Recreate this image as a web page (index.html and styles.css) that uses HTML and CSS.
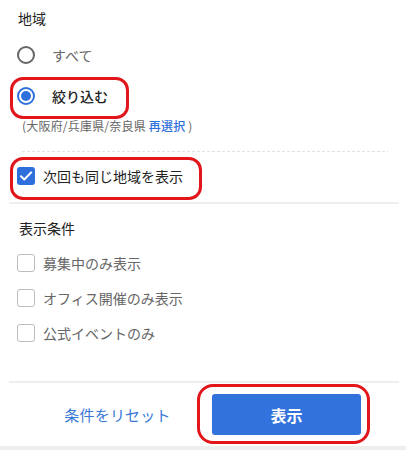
FILE: index.html
```html
<!DOCTYPE html>
<html lang="ja">
<head>
<meta charset="utf-8">
<title>絞り込み条件</title>
<link rel="stylesheet" href="styles.css">
</head>
<body>
<div class="panel">
  <section class="group group-area">
    <h2 class="group-title">地域</h2>
    <div class="row">
      <span class="radio"></span>
      <span class="label label-muted">すべて</span>
    </div>
    <div class="row mark mark-radio">
      <span class="radio radio-on"></span>
      <span class="label label-strong">絞り込む</span>
    </div>
    <p class="note">(大阪府/兵庫県/奈良県 <a class="note-link">再選択</a> )</p>
    <div class="dash"></div>
    <div class="row row-remember mark mark-check">
      <span class="check check-on">
        <svg viewBox="0 0 18 18" width="18" height="18"><path d="M4 9.2l3.3 3.3L14.2 5.4" fill="none" stroke="#fff" stroke-width="2" stroke-linecap="round" stroke-linejoin="round"/></svg>
      </span>
      <span class="label">次回も同じ地域を表示</span>
    </div>
  </section>

  <div class="rule"></div>

  <section class="group group-cond">
    <h2 class="group-title">表示条件</h2>
    <div class="row row-cond">
      <span class="check"></span>
      <span class="label label-muted">募集中のみ表示</span>
    </div>
    <div class="row row-cond">
      <span class="check"></span>
      <span class="label label-muted">オフィス開催のみ表示</span>
    </div>
    <div class="row row-cond">
      <span class="check"></span>
      <span class="label label-muted">公式イベントのみ</span>
    </div>
  </section>

  <div class="rule rule-foot"></div>

  <footer class="actions">
    <a class="reset">条件をリセット</a>
    <div class="submit-wrap mark mark-btn">
      <button class="submit" type="button">表示</button>
    </div>
  </footer>
  <div class="strip"></div>
</div>
</body>
</html>
```

FILE: styles.css
```css
* { box-sizing: border-box; }

html, body {
  margin: 0;
  background: #fff;
}

body {
  font-family: "Noto Sans CJK JP", "Noto Sans", sans-serif;
  color: #222;
  overflow: hidden;
}

.panel {
  width: 406px;
}

.group-area {
  padding-top: 8px;
}

.group-title {
  margin: 0;
  padding-left: 18px;
  font-size: 14px;
  font-weight: 400;
  line-height: 20px;
  color: #222;
}

.row {
  display: flex;
  align-items: center;
  height: 41px;
  padding-left: 17px;
}

.group-area .row:first-of-type {
  margin-top: 6px;
}

.radio {
  position: relative;
  width: 18px;
  height: 18px;
  border: 2px solid #666;
  border-radius: 50%;
  margin-right: 17px;
  flex: none;
}

.radio-on {
  border-color: #2f6fdb;
}

.radio-on::before {
  content: "";
  position: absolute;
  left: 2px;
  top: 2px;
  width: 10px;
  height: 10px;
  border-radius: 50%;
  background: #2f6fdb;
}

.label {
  font-size: 14px;
  line-height: 20px;
  color: #222;
}

.label-muted {
  color: #666;
}

.label-strong {
  font-weight: 500;
  color: #1f1f1f;
}

.note {
  margin: 1px 0 0;
  padding-left: 22px;
  font-size: 12px;
  line-height: 18px;
  letter-spacing: 0.2px;
  color: #666;
}

.note-link {
  color: #2f6fdb;
  font-weight: 500;
}

.dash {
  margin: 16px 18px 0 22px;
  height: 1px;
  background: repeating-linear-gradient(to right, #e2e2e2 0 3px, transparent 3px 5px);
}

.row-remember {
  height: 36px;
  margin-top: 6px;
}

.check {
  width: 18px;
  height: 18px;
  border: 1.5px solid #bdbdbd;
  border-radius: 3px;
  margin-right: 8px;
  flex: none;
}

.check-on {
  display: flex;
  border: none;
  background: #2f6fdb;
}

.rule {
  margin: 8px 7px 0 9px;
  height: 2px;
  background: #eeeeee;
}

.group-cond {
  padding-top: 14px;
}

.group-cond .group-title {
  padding-left: 19px;
  margin-bottom: 7px;
}

.row-cond {
  height: 35px;
}

.rule-foot {
  margin-top: 31px;
}

.actions {
  display: grid;
  grid-template-columns: 1fr 1fr;
  gap: 20px;
  padding: 11px 45px 11px 43px;
  align-items: center;
}

.reset {
  text-align: center;
  font-size: 15px;
  line-height: 20px;
  letter-spacing: 0.2px;
  color: #3a78d8;
}

.submit {
  display: block;
  width: 100%;
  height: 41px;
  border: none;
  border-radius: 3px;
  background: #3272dc;
  color: #fff;
  font-family: inherit;
  font-size: 16px;
  font-weight: 700;
}

.strip {
  height: 10px;
  background: #eeeeee;
}

/* red callout rings drawn over the highlighted controls */
.mark {
  position: relative;
}

.mark::after {
  content: "";
  position: absolute;
  border: 3px solid #e2151b;
  border-radius: 13px;
  pointer-events: none;
}

.mark-radio::after {
  left: 10px;
  top: 2px;
  width: 113px;
  height: 36px;
}

.mark-check::after {
  left: 10px;
  top: -1px;
  width: 186px;
  height: 37px;
}

.mark-btn::after {
  left: -15px;
  top: -10px;
  right: -9px;
  bottom: -9px;
  border-radius: 16px;
}
```
